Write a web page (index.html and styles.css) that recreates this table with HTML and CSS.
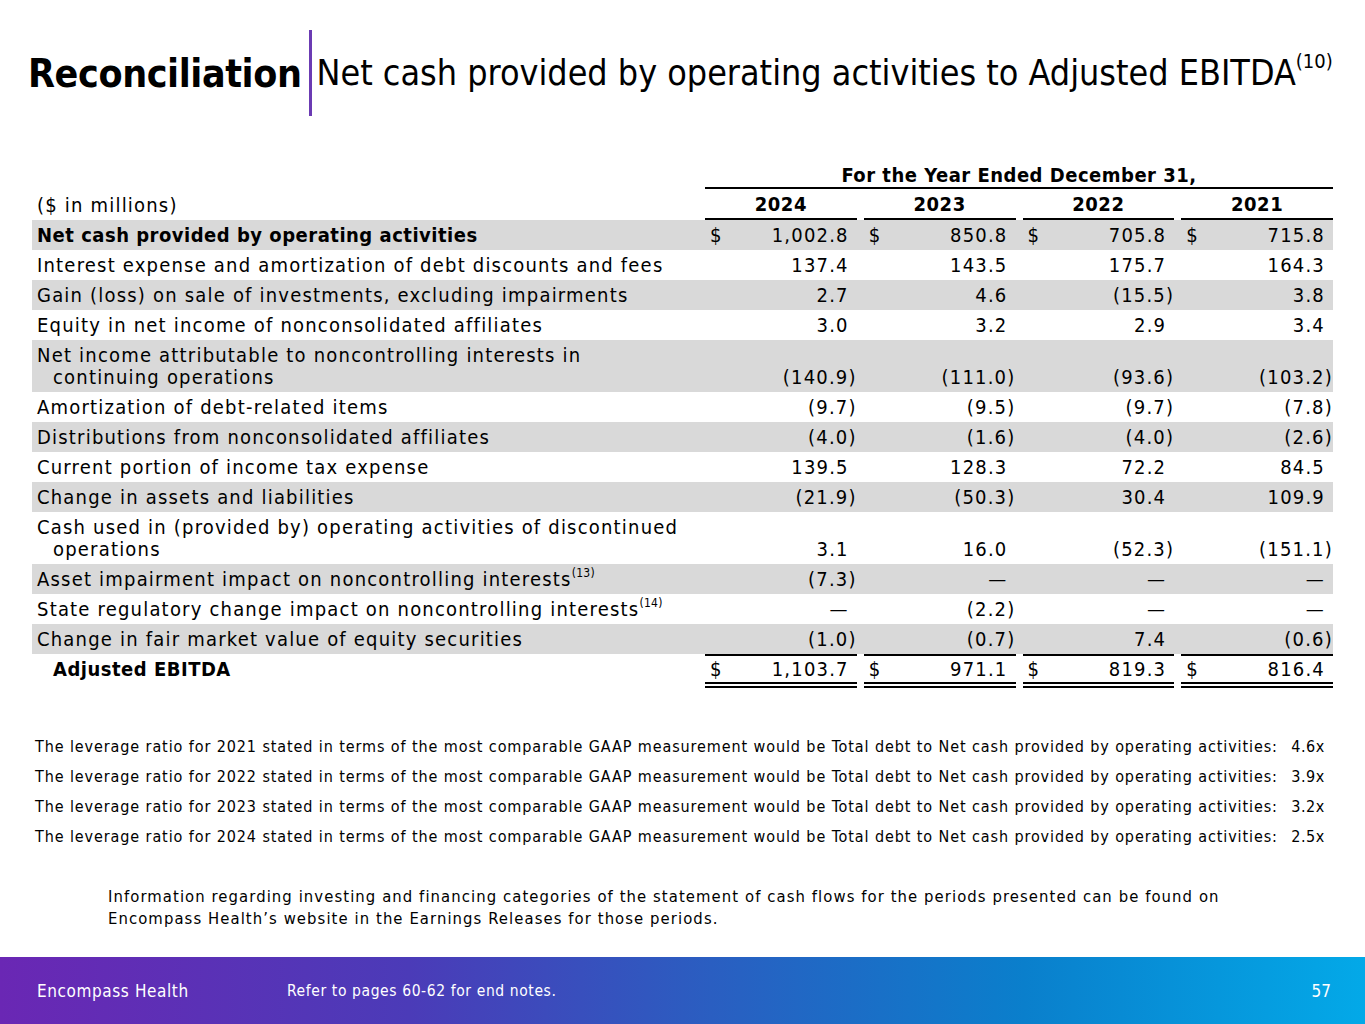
FILE: index.html
```html
<!DOCTYPE html>
<html>
<head>
<meta charset="utf-8">
<link rel="stylesheet" href="styles.css">
</head>
<body>
<div class="slide">
  <header class="title">
    <h1 class="title-main">Reconciliation</h1>
    <div class="title-bar"></div>
    <h2 class="title-sub">Net cash provided by operating activities to Adjusted EBITDA<sup>(10)</sup></h2>
  </header>

  <section class="table">
    <div class="row head-top">
      <div class="label"></div>
      <div class="period">For the Year Ended December 31,</div>
    </div>
    <div class="row head-years">
      <div class="label">($ in millions)</div>
      <div class="year">2024</div>
      <div class="year">2023</div>
      <div class="year">2022</div>
      <div class="year">2021</div>
    </div>

    <div class="row shade bold">
      <div class="label">Net cash provided by operating activities</div>
      <div class="val top"><span class="cur">$</span><span>1,002.8</span></div>
      <div class="val top"><span class="cur">$</span><span>850.8</span></div>
      <div class="val top"><span class="cur">$</span><span>705.8</span></div>
      <div class="val top"><span class="cur">$</span><span>715.8</span></div>
    </div>
    <div class="row">
      <div class="label">Interest expense and amortization of debt discounts and fees</div>
      <div class="val"><span>137.4</span></div>
      <div class="val"><span>143.5</span></div>
      <div class="val"><span>175.7</span></div>
      <div class="val"><span>164.3</span></div>
    </div>
    <div class="row shade">
      <div class="label">Gain (loss) on sale of investments, excluding impairments</div>
      <div class="val"><span>2.7</span></div>
      <div class="val"><span>4.6</span></div>
      <div class="val"><span>(15.5<span class="paren">)</span></span></div>
      <div class="val"><span>3.8</span></div>
    </div>
    <div class="row">
      <div class="label">Equity in net income of nonconsolidated affiliates</div>
      <div class="val"><span>3.0</span></div>
      <div class="val"><span>3.2</span></div>
      <div class="val"><span>2.9</span></div>
      <div class="val"><span>3.4</span></div>
    </div>
    <div class="row shade">
      <div class="label">Net income attributable to noncontrolling interests in continuing operations</div>
      <div class="val"><span>(140.9<span class="paren">)</span></span></div>
      <div class="val"><span>(111.0<span class="paren">)</span></span></div>
      <div class="val"><span>(93.6<span class="paren">)</span></span></div>
      <div class="val"><span>(103.2<span class="paren">)</span></span></div>
    </div>
    <div class="row">
      <div class="label">Amortization of debt-related items</div>
      <div class="val"><span>(9.7<span class="paren">)</span></span></div>
      <div class="val"><span>(9.5<span class="paren">)</span></span></div>
      <div class="val"><span>(9.7<span class="paren">)</span></span></div>
      <div class="val"><span>(7.8<span class="paren">)</span></span></div>
    </div>
    <div class="row shade">
      <div class="label">Distributions from nonconsolidated affiliates</div>
      <div class="val"><span>(4.0<span class="paren">)</span></span></div>
      <div class="val"><span>(1.6<span class="paren">)</span></span></div>
      <div class="val"><span>(4.0<span class="paren">)</span></span></div>
      <div class="val"><span>(2.6<span class="paren">)</span></span></div>
    </div>
    <div class="row">
      <div class="label">Current portion of income tax expense</div>
      <div class="val"><span>139.5</span></div>
      <div class="val"><span>128.3</span></div>
      <div class="val"><span>72.2</span></div>
      <div class="val"><span>84.5</span></div>
    </div>
    <div class="row shade">
      <div class="label">Change in assets and liabilities</div>
      <div class="val"><span>(21.9<span class="paren">)</span></span></div>
      <div class="val"><span>(50.3<span class="paren">)</span></span></div>
      <div class="val"><span>30.4</span></div>
      <div class="val"><span>109.9</span></div>
    </div>
    <div class="row">
      <div class="label">Cash used in (provided by) operating activities of discontinued operations</div>
      <div class="val"><span>3.1</span></div>
      <div class="val"><span>16.0</span></div>
      <div class="val"><span>(52.3<span class="paren">)</span></span></div>
      <div class="val"><span>(151.1<span class="paren">)</span></span></div>
    </div>
    <div class="row shade">
      <div class="label">Asset impairment impact on noncontrolling interests<sup>(13)</sup></div>
      <div class="val"><span>(7.3<span class="paren">)</span></span></div>
      <div class="val"><span class="dash">—</span></div>
      <div class="val"><span class="dash">—</span></div>
      <div class="val"><span class="dash">—</span></div>
    </div>
    <div class="row">
      <div class="label">State regulatory change impact on noncontrolling interests<sup>(14)</sup></div>
      <div class="val"><span class="dash">—</span></div>
      <div class="val"><span>(2.2<span class="paren">)</span></span></div>
      <div class="val"><span class="dash">—</span></div>
      <div class="val"><span class="dash">—</span></div>
    </div>
    <div class="row shade">
      <div class="label">Change in fair market value of equity securities</div>
      <div class="val"><span>(1.0<span class="paren">)</span></span></div>
      <div class="val"><span>(0.7<span class="paren">)</span></span></div>
      <div class="val"><span>7.4</span></div>
      <div class="val"><span>(0.6<span class="paren">)</span></span></div>
    </div>
    <div class="row bold total">
      <div class="label indent">Adjusted EBITDA</div>
      <div class="val top dbl"><span class="cur">$</span><span>1,103.7</span></div>
      <div class="val top dbl"><span class="cur">$</span><span>971.1</span></div>
      <div class="val top dbl"><span class="cur">$</span><span>819.3</span></div>
      <div class="val top dbl"><span class="cur">$</span><span>816.4</span></div>
    </div>
  </section>

  <section class="ratios">
    <div class="ratio"><span>The leverage ratio for 2021 stated in terms of the most comparable GAAP measurement would be Total debt to Net cash provided by operating activities:</span><span>4.6x</span></div>
    <div class="ratio"><span>The leverage ratio for 2022 stated in terms of the most comparable GAAP measurement would be Total debt to Net cash provided by operating activities:</span><span>3.9x</span></div>
    <div class="ratio"><span>The leverage ratio for 2023 stated in terms of the most comparable GAAP measurement would be Total debt to Net cash provided by operating activities:</span><span>3.2x</span></div>
    <div class="ratio"><span>The leverage ratio for 2024 stated in terms of the most comparable GAAP measurement would be Total debt to Net cash provided by operating activities:</span><span>2.5x</span></div>
  </section>

  <p class="info">Information regarding investing and financing categories of the statement of cash flows for the periods presented can be found on<br>Encompass Health’s website in the Earnings Releases for those periods.</p>

  <footer class="footer">
    <span class="brand">Encompass Health</span>
    <span class="refer">Refer to pages 60-62 for end notes.</span>
    <span class="page">57</span>
  </footer>
</div>
</body>
</html>
```

FILE: styles.css
```css
* { box-sizing: border-box; }
html, body { margin: 0; padding: 0; }
body {
  width: 1365px;
  height: 1024px;
  overflow: hidden;
  background: #fff;
  font-family: "DejaVu Sans Condensed", "DejaVu Sans", sans-serif;
  color: #000;
}
.slide {
  width: 1365px;
  height: 1024px;
  display: flex;
  flex-direction: column;
}

/* Title */
.title {
  display: flex;
  align-items: center;
  height: 86px;
  margin-top: 30px;
  padding-left: 28px;
}
.title-main {
  margin: 0;
  font-size: 39px;
  font-weight: bold;
  letter-spacing: -0.4px;
  line-height: 1;
}
.title-bar {
  width: 3px;
  height: 86px;
  background: #6b3bb3;
  margin: 0 5px 0 7px;
}
.title-sub {
  margin: 0;
  font-size: 35.6px;
  font-weight: normal;
  line-height: 1;
}
.title-sub sup {
  font-size: 20px;
  vertical-align: 17px;
  line-height: 0;
}

/* Table */
.table {
  margin: 48px 32px 0 32px;
  width: 1301px;
  font-size: 20px;
  letter-spacing: 1.2px;
}
.row {
  display: grid;
  grid-template-columns: 666px repeat(4, 1fr);
  align-items: end;
}
.row.shade { background: #d9d9d9; }
.row.bold .label,
.head-top .period,
.year { font-weight: bold; letter-spacing: 0.5px; }
.label {
  padding: 4px 14px 4px 21px;
  text-indent: -16px;
  line-height: 22px;
}
.label.indent { padding-left: 21px; text-indent: 0; }
.label sup { font-size: 12px; line-height: 0; vertical-align: 9px; letter-spacing: 0.3px; }

.head-top .period {
  grid-column: 2 / 6;
  text-align: center;
  line-height: 22px;
  padding-bottom: 1px;
  margin-left: 7px;
  border-bottom: 2px solid #000;
}
.year {
  text-align: center;
  line-height: 22px;
  padding: 4px 0 3px;
  margin-left: 7px;
  border-bottom: 2px solid #000;
}
.val {
  display: flex;
  justify-content: flex-end;
  margin-left: 7px;
  padding: 4px 8px 4px 0;
  line-height: 22px;
}
.val .cur { margin-right: auto; margin-left: 5px; }
.paren { margin-right: -8px; }
.row.total { align-items: start; }
.total .val.dbl {
  border-top: 2px solid #000;
  border-bottom: 6px double #000;
  padding-top: 2px;
  padding-bottom: 2px;
}
.total .label { padding-top: 4px; }

/* Ratios */
.ratios {
  margin: 44px 0 0 35px;
  width: 1290px;
  font-size: 16px;
  letter-spacing: 0.9px;
}
.ratio {
  display: flex;
  justify-content: space-between;
  line-height: 30px;
}
.ratio span:last-child { letter-spacing: 0.6px; }

.info {
  margin: 34px 0 0 108px;
  font-size: 16.5px;
  letter-spacing: 1.08px;
  line-height: 22px;
}

/* Footer */
.footer {
  margin-top: auto;
  height: 67px;
  display: flex;
  align-items: center;
  padding: 0 34px 0 37px;
  color: #fff;
  background: linear-gradient(90deg, #6a27b4 0%, #4b3bb8 30%, #2d5bc0 50%, #0a7fcc 75%, #03a9e8 100%);
}
.brand { font-size: 17px; letter-spacing: 0.6px; width: 250px; }
.refer { font-size: 15.5px; letter-spacing: 0.6px; }
.page { margin-left: auto; font-size: 17px; }
```
